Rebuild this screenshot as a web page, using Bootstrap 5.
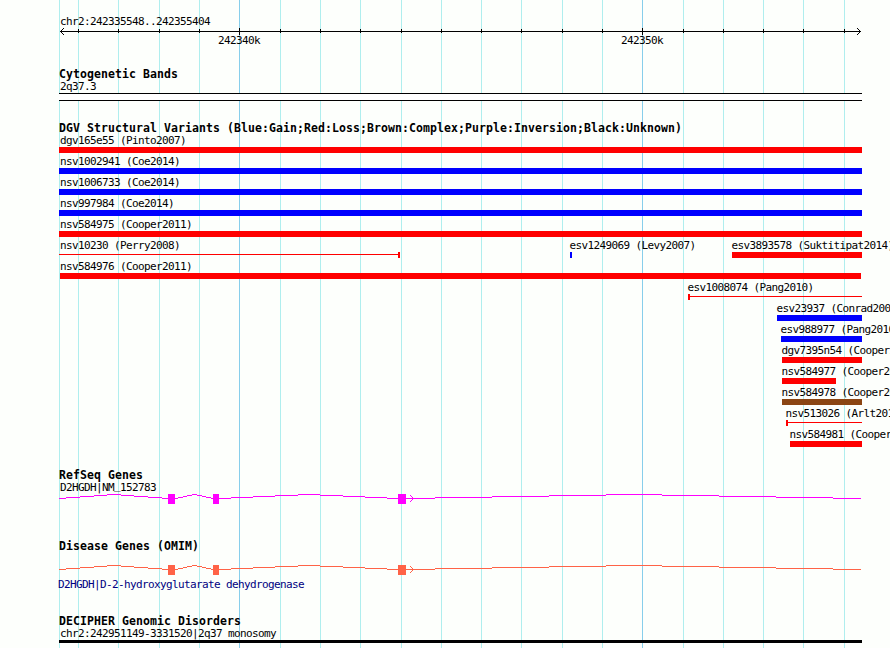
<!DOCTYPE html>
<html lang="en">
<head>
    <meta charset="UTF-8">
    <title>chr2:242335548..242355404</title>
    <link href="https://cdn.jsdelivr.net/npm/bootstrap@5.3.2/dist/css/bootstrap.min.css" rel="stylesheet">
    <style>
        body {
            background-color: #fdfffc;
            color: #000;
            font-family: "DejaVu Sans Mono", monospace;
            font-size: 11px;
        }
        .browser-panel {
            width: 890px;
            height: 648px;
            padding-left: 59px;
            padding-top: 14px;
        }
        .grid-lines { z-index: -1; }
        svg { shape-rendering: crispEdges; }
        .track { width: 803px; }
        .track-title {
            height: 12px;
            line-height: 15px;
            font-size: 11.5px;
            font-weight: bold;
            letter-spacing: 0.077px;
            white-space: pre;
        }
        .track-label {
            height: 14px;
            line-height: 15px;
            letter-spacing: -0.623px;
            white-space: pre;
            margin-left: -0.5px;
        }
        .label-clamped { margin-left: 1px; }
        .raised { line-height: 0; vertical-align: 2px; }
        .scale-labels { height: 14px; margin-top: -2px; padding-left: 159px; }
        .scale-labels .track-label { width: 403px; flex-shrink: 0; margin-left: 0; }
        .band { height: 8px; background-color: #fff; border: solid #000; border-width: 1px 0; }
        .feature-row { height: 21px; }
        .feature-bar { height: 6px; }
        .feature-line { height: 6px; background: linear-gradient(currentColor, currentColor) 0 2px / 100% 1px no-repeat; }
        .cap-start { border-left: 2px solid; }
        .cap-end { border-right: 2px solid; }
        .omim-label { color: #000080; margin: 2px 0 0 -1px; }
        .region-bar { height: 3px; background-color: #000; }
    </style>
</head>
<body>

<div class="browser-panel position-relative overflow-hidden">
    <svg class="grid-lines position-absolute top-0 start-0" id="gridLines" width="890" height="648"></svg>

    <!-- Scale -->
    <section class="track">
        <div class="track-label label-clamped">chr2:242335548..242355404</div>
        <svg class="d-block" id="ruler" width="803" height="7"></svg>
        <div class="scale-labels d-flex">
            <div class="track-label">242340k</div>
            <div class="track-label">242350k</div>
        </div>
    </section>

    <!-- Cytogenetic bands -->
    <section class="track" style="margin-top: 20px">
        <div class="track-title">Cytogenetic Bands</div>
        <div class="track-label label-clamped">2q37.3</div>
        <div class="band"></div>
    </section>

    <!-- Structural variants -->
    <section class="track" style="margin-top: 20px">
        <div class="track-title">DGV Structural Variants (Blue:Gain;Red:Loss;Brown:Complex;Purple:Inversion;Black:Unknown)</div>
        <div id="variants"></div>
    </section>

    <!-- RefSeq -->
    <section class="track" style="margin-top: 20px">
        <div class="track-title">RefSeq Genes</div>
        <div class="track-label label-clamped">D2HGDH|NM<span class="raised">_</span>152783</div>
        <svg class="gene d-block" data-color="#ff00ff" width="803" height="10"></svg>
    </section>

    <!-- OMIM -->
    <section class="track" style="margin-top: 35px">
        <div class="track-title">Disease Genes (OMIM)</div>
        <svg class="gene d-block" data-color="#ff6347" width="803" height="10" style="margin-top: 14px"></svg>
        <div class="track-label omim-label">D2HGDH|D-2-hydroxyglutarate dehydrogenase</div>
    </section>

    <!-- DECIPHER -->
    <section class="track" style="margin-top: 23px">
        <div class="track-title">DECIPHER Genomic Disorders</div>
        <div class="track-label label-clamped">chr2:242951149-3331520|2q37 monosomy</div>
        <div class="region-bar"></div>
    </section>
</div>

<script src="https://cdn.jsdelivr.net/npm/bootstrap@5.3.2/dist/js/bootstrap.bundle.min.js"></script>
<script>
    const LEFT = 59;
    const ticks = [78, 118, 159, 199, 239, 280, 320, 360, 401, 441, 481, 521, 562, 602, 642, 683, 723, 763, 803, 844];
    const isMajor = x => x === 239 || x === 642;
    const rect = (x, y, w, h, fill) => `<rect x="${x}" y="${y}" width="${w}" height="${h}" fill="${fill}"/>`;

    document.getElementById("gridLines").innerHTML = [LEFT, ...ticks]
        .map(x => rect(x, 0, 1, 648, isMajor(x) ? "#87ceeb" : "#afeeee")).join("");

    // axis, ticks and one-pixel steps of the arrowheads
    let ruler = rect(1, 3, 801, 1, "#000");
    ticks.forEach(x => {
        ruler += isMajor(x) ? rect(x - LEFT, 0, 1, 7, "#000") : rect(x - LEFT, 1, 1, 4, "#000");
    });
    for (let i = 1; i <= 3; i++) {
        [3 - i, 3 + i].forEach(y => {
            ruler += rect(1 + i, y, 1, 1, "#000") + rect(801 - i, y, 1, 1, "#000");
        });
    }
    document.getElementById("ruler").innerHTML = ruler;

    // [name, start, end, color, cap side for thin features]
    const red = "#ff0000", blue = "#0000ff", brown = "#8b4513";
    const rows = [
        [["dgv165e55 (Pinto2007)", 59, 862, red]],
        [["nsv1002941 (Coe2014)", 59, 862, blue]],
        [["nsv1006733 (Coe2014)", 59, 862, blue]],
        [["nsv997984 (Coe2014)", 59, 862, blue]],
        [["nsv584975 (Cooper2011)", 59, 862, red]],
        [
            ["nsv10230 (Perry2008)", 59, 400, red, "end"],
            ["esv1249069 (Levy2007)", 570, 572, blue],
            ["esv3893578 (Suktitipat2014)", 732, 862, red]
        ],
        [["nsv584976 (Cooper2011)", 60, 861, red]],
        [["esv1008074 (Pang2010)", 688, 862, red, "start"]],
        [["esv23937 (Conrad2009)", 777, 862, blue]],
        [["esv988977 (Pang2010)", 781, 862, blue]],
        [["dgv7395n54 (Cooper2011)", 782, 862, red]],
        [["nsv584977 (Cooper2011)", 782, 836, red]],
        [["nsv584978 (Cooper2011)", 782, 862, brown]],
        [["nsv513026 (Arlt2011)", 786, 862, red, "start"]],
        [["nsv584981 (Cooper2011)", 790, 862, red]]
    ];

    document.getElementById("variants").innerHTML = rows.map(row => {
        let pos = LEFT;
        const items = row.map(([name, start, end, color, cap]) => {
            const gap = start - pos;
            pos = end;
            const labelClass = start === LEFT ? "label-clamped" : start === LEFT + 1 ? "ms-0" : "";
            const bar = cap
                ? `<div class="feature-line cap-${cap}" style="color: ${color}"></div>`
                : `<div class="feature-bar" style="background-color: ${color}"></div>`;
            return `<div class="flex-shrink-0" style="margin-left: ${gap}px; width: ${end - start}px">
                <div class="track-label ${labelClass}">${name}</div>${bar}</div>`;
        });
        return `<div class="feature-row d-flex">${items.join("")}</div>`;
    }).join("");

    // introns rise 4px to the midpoint and fall back, in whole pixel steps
    function intron(x1, x2, color) {
        const mid = (x1 + x2) / 2;
        const step = (mid - x1) / 4;
        let out = "", start = x1, level = 0;
        for (let x = x1; x <= x2; x++) {
            const next = x === x2 ? -1 : Math.round((mid - x1 - Math.abs(x - mid)) / step);
            if (next !== level) {
                out += rect(start - LEFT, 4 - level, x - start, 1, color);
                start = x;
                level = next;
            }
        }
        return out;
    }

    document.querySelectorAll(".gene").forEach(svg => {
        const color = svg.dataset.color;
        const exons = [[168, 175], [213, 219], [398, 406]];
        let out = intron(59, 168, color) + intron(175, 213, color) + intron(219, 398, color) + intron(406, 861, color);
        exons.forEach(([a, b]) => out += rect(a - LEFT, 0, b - a, 10, color));
        // strand arrow
        for (let i = 1; i <= 3; i++) {
            out += rect(413 - i - LEFT, 4 - i, 1, 1, color) + rect(413 - i - LEFT, 4 + i, 1, 1, color);
        }
        svg.innerHTML = out;
    });
</script>

</body>
</html>
